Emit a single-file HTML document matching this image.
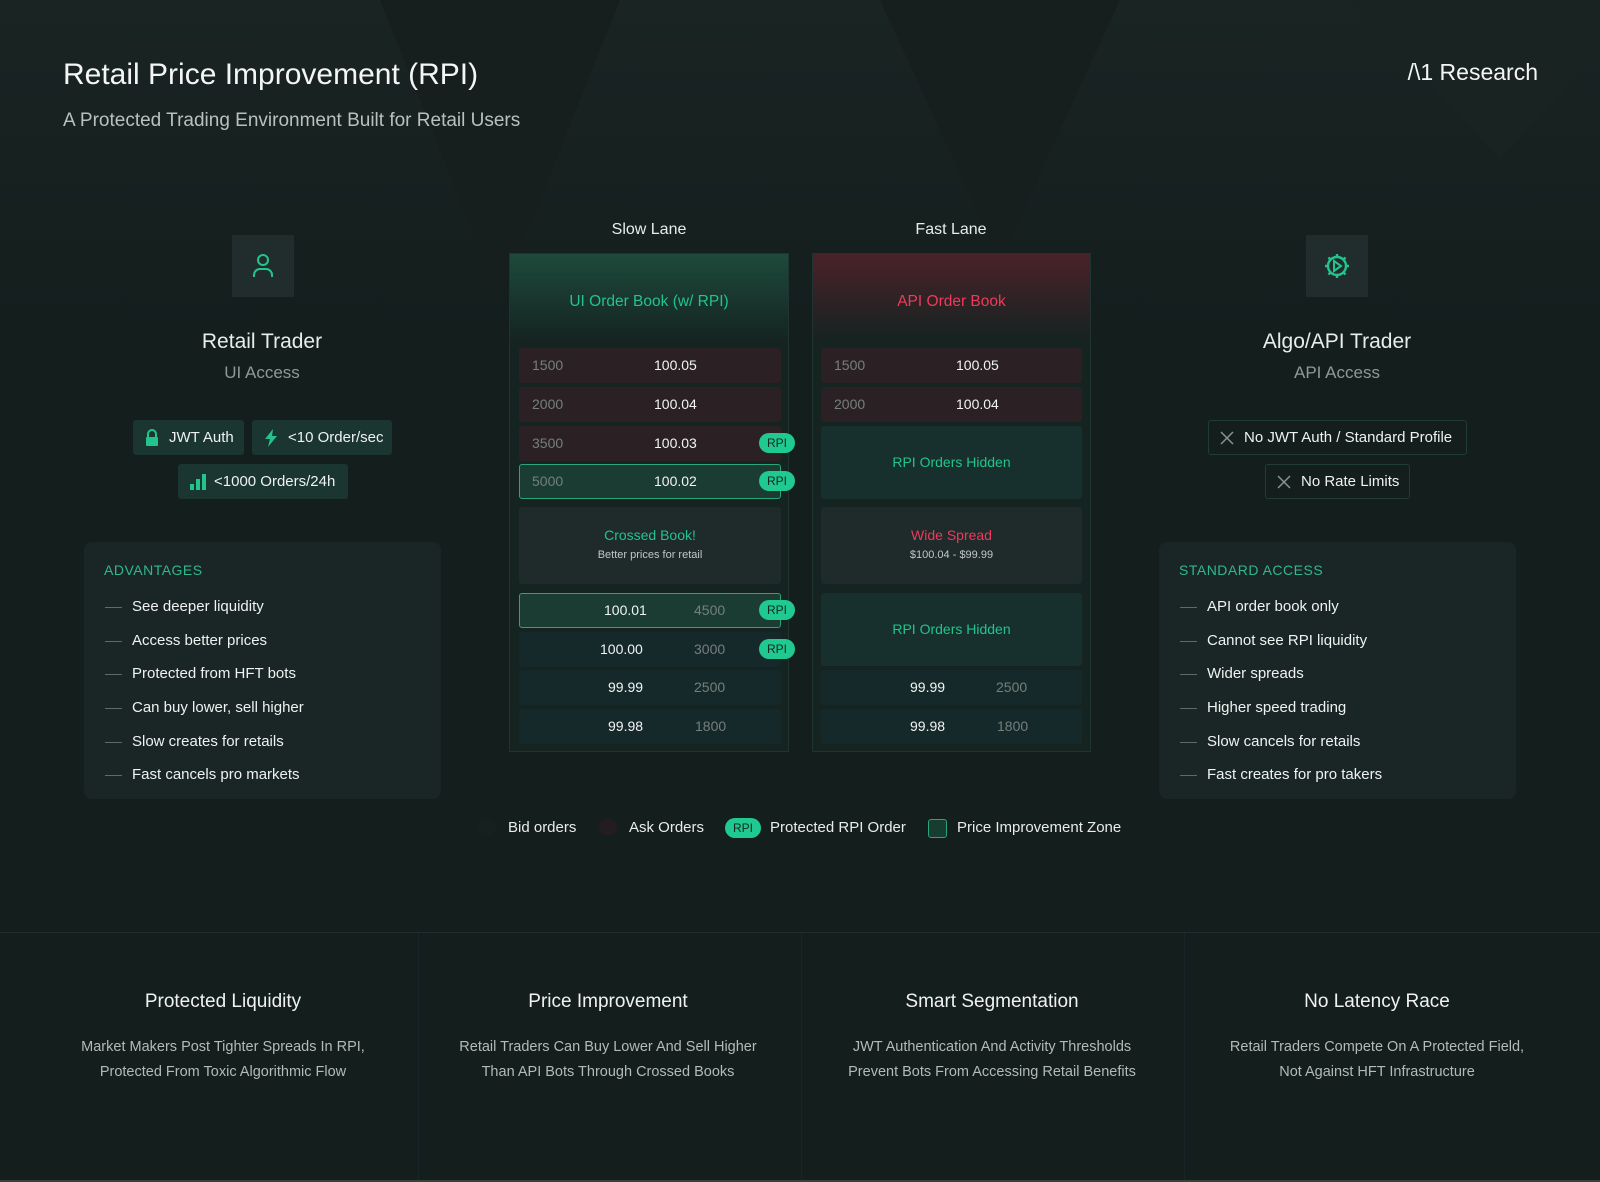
<!DOCTYPE html>
<html><head><meta charset="utf-8"><style>
*{margin:0;padding:0;box-sizing:border-box}
body{width:1600px;height:1182px;overflow:hidden;background:#141e1d;font-family:"Liberation Sans",sans-serif;color:#e8ecea;position:relative}
.a{position:absolute}
.c{text-align:center}
.bg1{left:0;top:0;width:1600px;height:330px;background:linear-gradient(180deg,#192423 0%,#141e1d 100%)}
.pill{position:absolute;height:35px;background:#1b3531;border-radius:3px;font-size:15px;line-height:35px;color:#eef2f0;padding-left:36px}
.pill svg{position:absolute;left:11px;top:9px}
.xp{position:absolute;height:35px;border:1px solid #213c37;border-radius:3px;font-size:15px;line-height:33px;color:#eef2f0;padding-left:35px}
.xp svg{position:absolute;left:10px;top:9px}
.box{position:absolute;background:#1a2625;border-radius:8px}
.box h4{position:absolute;left:20px;top:20px;font-weight:normal;font-size:14px;letter-spacing:.5px;color:#2fb98a}
.li{position:absolute;left:48px;font-size:15px;color:#eef2f0}
.li:before{content:"";position:absolute;left:-27px;top:9px;width:17px;height:1px;background:#5d6a67}
.panel{position:absolute;top:253px;height:499px;border:1px solid #1f3331;background:#152321}
.ph{position:absolute;left:0;top:0;right:0;height:88px}
.row{position:absolute;height:35px;border-radius:3px;font-size:14px;line-height:35px}
.ask{background:#2b2125}
.bid{background:#16292a}
.q{position:absolute;color:#757f7c}
.p{position:absolute;color:#f2f4f3}
.hl{background:#1a3c32;border:1.5px solid #2aa47b}
.rpi{position:absolute;width:36px;height:20px;border-radius:10px;background:#1fc98f;color:#0f2b22;font-size:12px;line-height:20px;text-align:center}
.hid{position:absolute;background:#17302d;border-radius:3px;color:#22c48b;font-size:14px;text-align:center}
.mid{position:absolute;background:#1f2a2a;border-radius:3px;text-align:center}
.ft{position:absolute;top:932px;height:250px;width:400px;text-align:center}
.ft h3{font-weight:normal;font-size:19px;margin-top:59px;color:#f0f2f1}
.ft p{font-size:14.5px;line-height:25px;color:#b3bab8;margin-top:22px}
</style></head><body>
<div class="a bg1"></div>
<div class="a" style="left:380px;top:0;width:0;height:0;border-left:120px solid transparent;border-right:120px solid transparent;border-top:300px solid #161f1e"></div>
<div class="a" style="left:880px;top:0;width:0;height:0;border-left:120px solid transparent;border-right:120px solid transparent;border-top:260px solid #161f1e"></div>
<div class="a" style="left:1350px;top:0;width:0;height:0;border-left:150px solid transparent;border-right:150px solid transparent;border-top:160px solid #192322"></div>

<div class="a" style="left:63px;top:58px;font-size:30px;color:#f4f6f5">Retail Price Improvement (RPI)</div>
<div class="a" style="left:63px;top:110px;font-size:19px;color:#b9c1be">A Protected Trading Environment Built for Retail Users</div>
<div class="a" style="right:62px;top:59px;font-size:23px;color:#f4f6f5">/\1 Research</div>

<div class="a" style="left:232px;top:235px;width:62px;height:62px;background:#212d2c"></div>
<svg class="a" style="left:252px;top:253px" width="22" height="26" viewBox="0 0 22 26" fill="none" stroke="#22c48b" stroke-width="2"><circle cx="11" cy="7" r="5"/><path d="M2 24v-2a6 6 0 0 1 6-6h6a6 6 0 0 1 6 6v2"/></svg>
<div class="a c" style="left:112px;width:300px;top:330px;font-size:21px">Retail Trader</div>
<div class="a c" style="left:112px;width:300px;top:363px;font-size:17px;color:#8f9996">UI Access</div>
<div class="pill" style="left:133px;top:420px;width:111px"><svg width="16" height="17" viewBox="0 0 16 17"><path d="M4 8V5a4 4 0 0 1 8 0v3" stroke="#22c48b" stroke-width="2" fill="none"/><rect x="2" y="8" width="12" height="9" rx="1" fill="#22c48b"/></svg>JWT Auth</div>
<div class="pill" style="left:252px;top:420px;width:140px"><svg width="16" height="18" viewBox="0 0 16 18"><path d="M10 0L2 10h5l-2 8 9-11H9z" fill="#22c48b"/></svg>&lt;10 Order/sec</div>
<div class="pill" style="left:178px;top:464px;width:170px"><svg width="18" height="17" viewBox="0 0 18 17" fill="#22c48b"><rect x="1" y="11" width="4" height="6"/><rect x="7" y="6" width="4" height="11"/><rect x="13" y="1" width="4" height="16"/></svg>&lt;1000 Orders/24h</div>

<div class="box" style="left:84px;top:542px;width:357px;height:257px"><h4>ADVANTAGES</h4>
<div class="li" style="top:56px">See deeper liquidity</div>
<div class="li" style="top:90px">Access better prices</div>
<div class="li" style="top:123px">Protected from HFT bots</div>
<div class="li" style="top:157px">Can buy lower, sell higher</div>
<div class="li" style="top:191px">Slow creates for retails</div>
<div class="li" style="top:224px">Fast cancels pro markets</div>
</div>

<div class="a" style="left:1306px;top:235px;width:62px;height:62px;background:#212d2c"></div>
<svg class="a" style="left:1323px;top:252px" width="28" height="28" viewBox="0 0 28 28" fill="none" stroke="#22c48b" stroke-width="2.4"><circle cx="14" cy="14" r="9"/><path d="M14 2v3M14 23v3M2 14h3M23 14h3M5.5 5.5l2 2M20.5 20.5l2 2M5.5 22.5l2-2M20.5 7.5l2-2"/><path d="M11 9l7 5-7 5z" stroke-width="2"/></svg>
<div class="a c" style="left:1187px;width:300px;top:330px;font-size:21px">Algo/API Trader</div>
<div class="a c" style="left:1187px;width:300px;top:363px;font-size:17px;color:#8f9996">API Access</div>
<div class="xp" style="left:1208px;top:420px;width:259px"><svg width="16" height="16" viewBox="0 0 16 16" stroke="#8a9491" stroke-width="1.5"><path d="M2 2l12 12M14 2L2 14"/></svg>No JWT Auth / Standard Profile</div>
<div class="xp" style="left:1265px;top:464px;width:145px"><svg width="16" height="16" viewBox="0 0 16 16" stroke="#8a9491" stroke-width="1.5"><path d="M2 2l12 12M14 2L2 14"/></svg>No Rate Limits</div>
<div class="box" style="left:1159px;top:542px;width:357px;height:257px"><h4>STANDARD ACCESS</h4>
<div class="li" style="top:56px">API order book only</div>
<div class="li" style="top:90px">Cannot see RPI liquidity</div>
<div class="li" style="top:123px">Wider spreads</div>
<div class="li" style="top:157px">Higher speed trading</div>
<div class="li" style="top:191px">Slow cancels for retails</div>
<div class="li" style="top:224px">Fast creates for pro takers</div>
</div>

<div class="a c" style="left:549px;width:200px;top:221px;font-size:16px">Slow Lane</div>
<div class="a c" style="left:851px;width:200px;top:221px;font-size:16px">Fast Lane</div>

<div class="panel" style="left:509px;width:280px">
<div class="ph" style="background:linear-gradient(180deg,#1d4a3b 0%,#152321 100%)"></div>
<div class="a c" style="left:0;right:0;top:39px;font-size:15.5px;color:#22c48b">UI Order Book (w/ RPI)</div>
</div>
<div class="panel" style="left:812px;width:279px">
<div class="ph" style="background:linear-gradient(180deg,#4a2229 0%,#152321 100%)"></div>
<div class="a c" style="left:0;right:0;top:39px;font-size:15.5px;color:#ee3a5c">API Order Book</div>
</div>

<div class="row ask" style="left:519px;top:348px;width:262px"><span class="q" style="left:13px">1500</span><span class="p" style="left:135px">100.05</span></div>
<div class="row ask" style="left:519px;top:387px;width:262px"><span class="q" style="left:13px">2000</span><span class="p" style="left:135px">100.04</span></div>
<div class="row ask" style="left:519px;top:426px;width:262px"><span class="q" style="left:13px">3500</span><span class="p" style="left:135px">100.03</span></div>
<div class="row hl" style="left:519px;top:464px;width:262px;line-height:32px"><span class="q" style="left:12px">5000</span><span class="p" style="left:134px">100.02</span></div>
<div class="mid" style="left:519px;top:507px;width:262px;height:77px"><div style="margin-top:20px;color:#22c48b;font-size:14px">Crossed Book!</div><div style="margin-top:6px;color:#c2c8c6;font-size:11px">Better prices for retail</div></div>
<div class="row hl" style="left:519px;top:593px;width:262px;line-height:32px"><span class="p" style="left:84px">100.01</span><span class="q" style="left:174px">4500</span></div>
<div class="row bid" style="left:519px;top:632px;width:262px"><span class="p" style="left:81px">100.00</span><span class="q" style="left:175px">3000</span></div>
<div class="row bid" style="left:519px;top:670px;width:262px"><span class="p" style="left:89px">99.99</span><span class="q" style="left:175px">2500</span></div>
<div class="row bid" style="left:519px;top:709px;width:262px"><span class="p" style="left:89px">99.98</span><span class="q" style="left:176px">1800</span></div>
<div class="rpi" style="left:759px;top:433px">RPI</div>
<div class="rpi" style="left:759px;top:471px">RPI</div>
<div class="rpi" style="left:759px;top:600px">RPI</div>
<div class="rpi" style="left:759px;top:639px">RPI</div>

<div class="row ask" style="left:821px;top:348px;width:261px"><span class="q" style="left:13px">1500</span><span class="p" style="left:135px">100.05</span></div>
<div class="row ask" style="left:821px;top:387px;width:261px"><span class="q" style="left:13px">2000</span><span class="p" style="left:135px">100.04</span></div>
<div class="hid" style="left:821px;top:426px;width:261px;height:73px;line-height:73px">RPI Orders Hidden</div>
<div class="mid" style="left:821px;top:507px;width:261px;height:77px"><div style="margin-top:20px;color:#ee3a5c;font-size:14px">Wide Spread</div><div style="margin-top:6px;color:#c2c8c6;font-size:11px">$100.04 - $99.99</div></div>
<div class="hid" style="left:821px;top:593px;width:261px;height:73px;line-height:73px">RPI Orders Hidden</div>
<div class="row bid" style="left:821px;top:670px;width:261px"><span class="p" style="left:89px">99.99</span><span class="q" style="left:175px">2500</span></div>
<div class="row bid" style="left:821px;top:709px;width:261px"><span class="p" style="left:89px">99.98</span><span class="q" style="left:176px">1800</span></div>

<div class="a" style="left:478px;top:818px;width:18px;height:18px;border-radius:50%;background:#16211f"></div>
<div class="a" style="left:508px;top:819px;font-size:15px">Bid orders</div>
<div class="a" style="left:599px;top:818px;width:18px;height:18px;border-radius:50%;background:#241d1f"></div>
<div class="a" style="left:629px;top:819px;font-size:15px">Ask Orders</div>
<div class="rpi" style="left:725px;top:818px;width:36px">RPI</div>
<div class="a" style="left:770px;top:819px;font-size:15px">Protected RPI Order</div>
<div class="a" style="left:928px;top:819px;width:19px;height:19px;border-radius:3px;background:#173c30;border:1.5px solid #2aa47b"></div>
<div class="a" style="left:957px;top:819px;font-size:15px">Price Improvement Zone</div>

<div class="a" style="left:0;top:932px;width:1600px;height:1px;background:#1c2f2c"></div>
<div class="a" style="left:418px;top:933px;width:1px;height:249px;background:#18262a"></div>
<div class="a" style="left:801px;top:933px;width:1px;height:249px;background:#18262a"></div>
<div class="a" style="left:1184px;top:933px;width:1px;height:249px;background:#18262a"></div>
<div class="a" style="left:0;top:1180px;width:1600px;height:2px;background:#3a4240"></div>
<div class="ft" style="left:23px"><h3>Protected Liquidity</h3><p>Market Makers Post Tighter Spreads In RPI,<br>Protected From Toxic Algorithmic Flow</p></div>
<div class="ft" style="left:408px"><h3>Price Improvement</h3><p>Retail Traders Can Buy Lower And Sell Higher<br>Than API Bots Through Crossed Books</p></div>
<div class="ft" style="left:792px"><h3>Smart Segmentation</h3><p>JWT Authentication And Activity Thresholds<br>Prevent Bots From Accessing Retail Benefits</p></div>
<div class="ft" style="left:1177px"><h3>No Latency Race</h3><p>Retail Traders Compete On A Protected Field,<br>Not Against HFT Infrastructure</p></div>
</body></html>
